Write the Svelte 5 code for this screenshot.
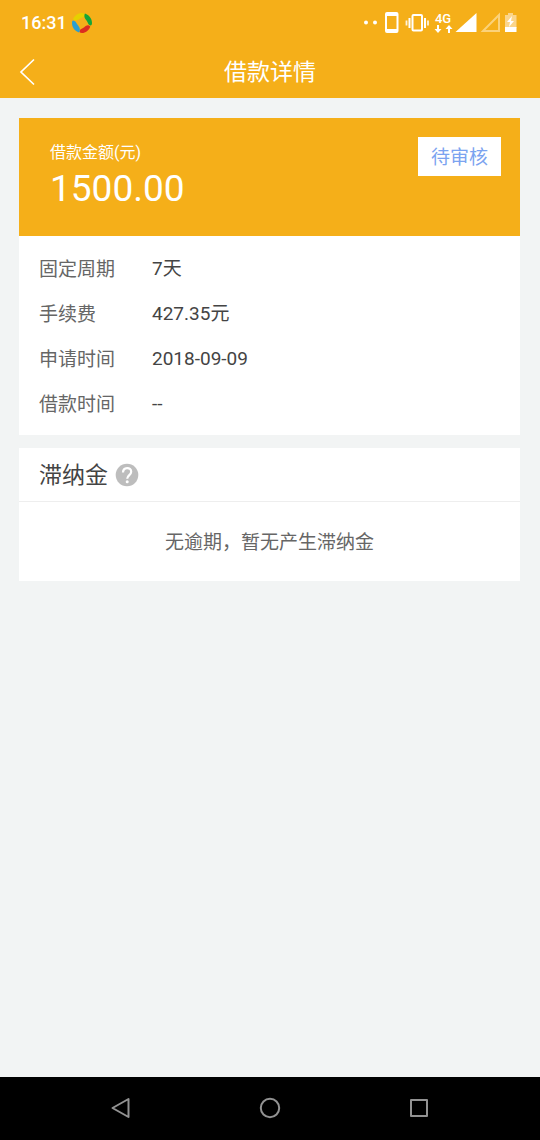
<script>
  const rows = [
    { label: '固定周期', value: '7天' },
    { label: '手续费', value: '427.35元' },
    { label: '申请时间', value: '2018-09-09' },
    { label: '借款时间', value: '--' }
  ];
</script>

<div class="screen">
  <header class="top">
    <div class="status">
      <div class="left">
        <time>16:31</time>
        <svg width="20" height="20" viewBox="0 0 20 20" aria-hidden="true">
          <path d="M1 6.500C2.500 2.500 6 0 10 0c2 0 3.200.8 3 2.200C12.500 4.500 10 4.200 8 5.500 6 7 4.500 8.500 1 6.500z" fill="#e6d000" />
          <path d="M13 .5C17.200 2 20 5.500 20 10c0 1.500-.5 2.500-1.500 2.500-2.500-.5-2.500-3-4-5C13 5.500 11.500 3.500 13 .5z" fill="#14a53a" />
          <path d="M18.300 13.500C17 17.500 13.500 20 10 20c-1.800 0-2.800-1-2.500-2 .8-2.500 3.200-2.500 5-4 1.800-1.700 3.500-2.800 5.800-.5z" fill="#dc2c20" />
          <path d="M7 19.500C2.800 18 0 14.500 0 10c0-1.500.3-2.500 1-2.500 2.500.2 3 2 4.500 4.200C7.300 14 9 16 7 19.500z" fill="#2b9fd0" />
        </svg>
      </div>
      <div class="right">
        <svg width="20" height="26" viewBox="0 0 20 26" fill="#fff" aria-hidden="true">
          <circle cx="4" cy="12.500" r="2" /><circle cx="13" cy="12.500" r="2" />
        </svg>
        <svg width="20" height="26" viewBox="0 0 20 26" aria-hidden="true">
          <path fill="#fff" fill-rule="evenodd" d="M5 2h9.500q2 0 2 2v17q0 2-2 2H5q-2 0-2-2V4q0-2 2-2zM5 6v13h9.500V6z" />
        </svg>
        <svg width="30" height="26" viewBox="0 0 30 26" fill="none" stroke="#fff" aria-hidden="true">
          <rect x="10.500" y="5" width="9.500" height="15.500" rx="1" stroke-width="2" />
          <path d="M7.500 8v10M23 8v10" stroke-width="2" />
          <path d="M4.500 10.500v5M26 10.500v5" stroke-width="1.800" stroke-opacity=".85" />
        </svg>
        <div class="network">
          <span>4G</span>
          <svg width="19" height="9" viewBox="0 0 19 9" aria-hidden="true">
            <path d="M4 0v5M15 3v5" stroke="#fff" stroke-width="2" />
            <path d="M.5 4h7L4 8zM11.500 4h7L15 0z" fill="#fff" />
          </svg>
        </div>
        <svg width="25" height="26" viewBox="0 0 25 26" aria-hidden="true">
          <path d="M22.500 3v19H1.500z" fill="#fff" />
        </svg>
        <svg width="25" height="26" viewBox="0 0 25 26" aria-hidden="true">
          <path d="M20 5v16H4z" fill="none" stroke="#fbd27a" stroke-width="2" />
        </svg>
        <svg width="14" height="26" viewBox="0 0 14 26" aria-hidden="true">
          <path d="M4 3h5v2h3.500v13H1V5h3z" fill="#fbd58a" />
          <path d="M1 17h11.500v5H1z" fill="#fff" />
          <path d="M8 6l-5 6h3l-1 5 5-6H7z" fill="#fff" />
        </svg>
      </div>
    </div>
    <div class="title">
      <button class="back" aria-label="返回">
        <svg width="18" height="28" viewBox="0 0 18 28" fill="none" stroke="#fff" stroke-width="1.700" aria-hidden="true">
          <path d="M15 1.500L2 14l13 12.500" />
        </svg>
      </button>
      <h1>借款详情</h1>
    </div>
  </header>

  <main>
    <section class="card">
      <div class="summary">
        <div>
          <div class="caption">借款金额(元)</div>
          <div class="amount">1500.00</div>
        </div>
        <span class="state">待审核</span>
      </div>
      <dl>
        {#each rows as row}
          <div class="row">
            <dt>{row.label}</dt>
            <dd>{row.value}</dd>
          </div>
        {/each}
      </dl>
    </section>

    <section class="card">
      <div class="heading">
        <h2>滞纳金</h2>
        <button class="help" aria-label="滞纳金说明">
          <svg width="24" height="24" viewBox="0 0 24 24" aria-hidden="true">
            <circle cx="12" cy="12" r="11.300" fill="#bdbdbd" />
            <path d="M8 9.500c0-5.800 8.200-5.800 8.200-.7 0 3.200-4 3.500-4 7" fill="none" stroke="#fff" stroke-width="2.200" />
            <circle cx="12.200" cy="18.800" r="1.500" fill="#fff" />
          </svg>
        </button>
      </div>
      <p>无逾期，暂无产生滞纳金</p>
    </section>
  </main>

  <nav>
    <button aria-label="后退">
      <svg width="22" height="22" viewBox="0 0 22 22"><path d="M18.500 2v18L2.500 11z" /></svg>
    </button>
    <button aria-label="主页">
      <svg width="22" height="22" viewBox="0 0 22 22"><circle cx="11" cy="11" r="9.200" /></svg>
    </button>
    <button aria-label="最近任务">
      <svg width="22" height="22" viewBox="0 0 22 22"><rect x="3" y="3" width="16" height="16" /></svg>
    </button>
  </nav>
</div>

<style>
  :global(body) { margin: 0; }
  .screen {
    display: flex;
    flex-direction: column;
    min-height: 100vh;
    background: #f2f4f4;
    color: #444;
    font-family: Roboto, "Noto Sans CJK SC", sans-serif;
    font-size: 19px;
    line-height: 24px;
  }
  h1, h2, p, dl, dd { margin: 0; font-weight: 400; }
  svg { display: block; flex: none; }
  button { display: flex; padding: 0; border: 0; background: none; cursor: pointer; }
  .top { background: #f5af19; color: #fff; }
  .status {
    display: flex;
    align-items: center;
    justify-content: space-between;
    height: 46px;
    padding: 0 22px 0 21px;
  }
  .left, .right { display: flex; align-items: center; }
  .left { gap: 5px; font-size: 18px; font-weight: 500; }
  .network {
    display: flex;
    flex-direction: column;
    align-items: center;
    width: 22px;
    font-size: 13px;
    font-weight: 500;
    line-height: 12px;
  }
  .title {
    display: grid;
    grid-template-columns: 1fr auto 1fr;
    align-items: center;
    height: 52px;
    padding: 0 19px;
  }
  .back { justify-self: start; }
  h1, h2 { padding-top: 2px; font-size: 23px; line-height: 32px; }
  main {
    display: flex;
    flex: 1;
    flex-direction: column;
    gap: 13px;
    padding: 20px 20px 20px 19px;
  }
  .card { background: #fff; }
  .summary {
    display: flex;
    align-items: flex-start;
    justify-content: space-between;
    padding: 19px 19px 23px 31px;
    background: #f5af19;
    color: #fff;
  }
  .caption { padding-top: 4px; font-size: 16px; }
  .amount { font-size: 37px; line-height: 48px; }
  .state { padding: 9px 13px 6px; background: #fff; color: #7ba3f0; }
  dl { padding: 10px 20px 9px; }
  .row { display: flex; align-items: center; height: 45px; }
  dt { width: 113px; padding-top: 2px; color: #666; }
  .heading {
    display: flex;
    align-items: center;
    gap: 7px;
    height: 53px;
    padding: 0 20px;
    border-bottom: 1px solid #eee;
  }
  p { padding: 29px 20px 26px; color: #666; text-align: center; }
  nav {
    display: grid;
    grid-template-columns: repeat(3, 1fr);
    height: 62px;
    padding: 0 46px 1px;
    background: #000;
  }
  nav button { align-items: center; justify-content: center; }
  nav svg { fill: none; stroke: #929292; stroke-width: 2; stroke-linejoin: round; }
</style>
